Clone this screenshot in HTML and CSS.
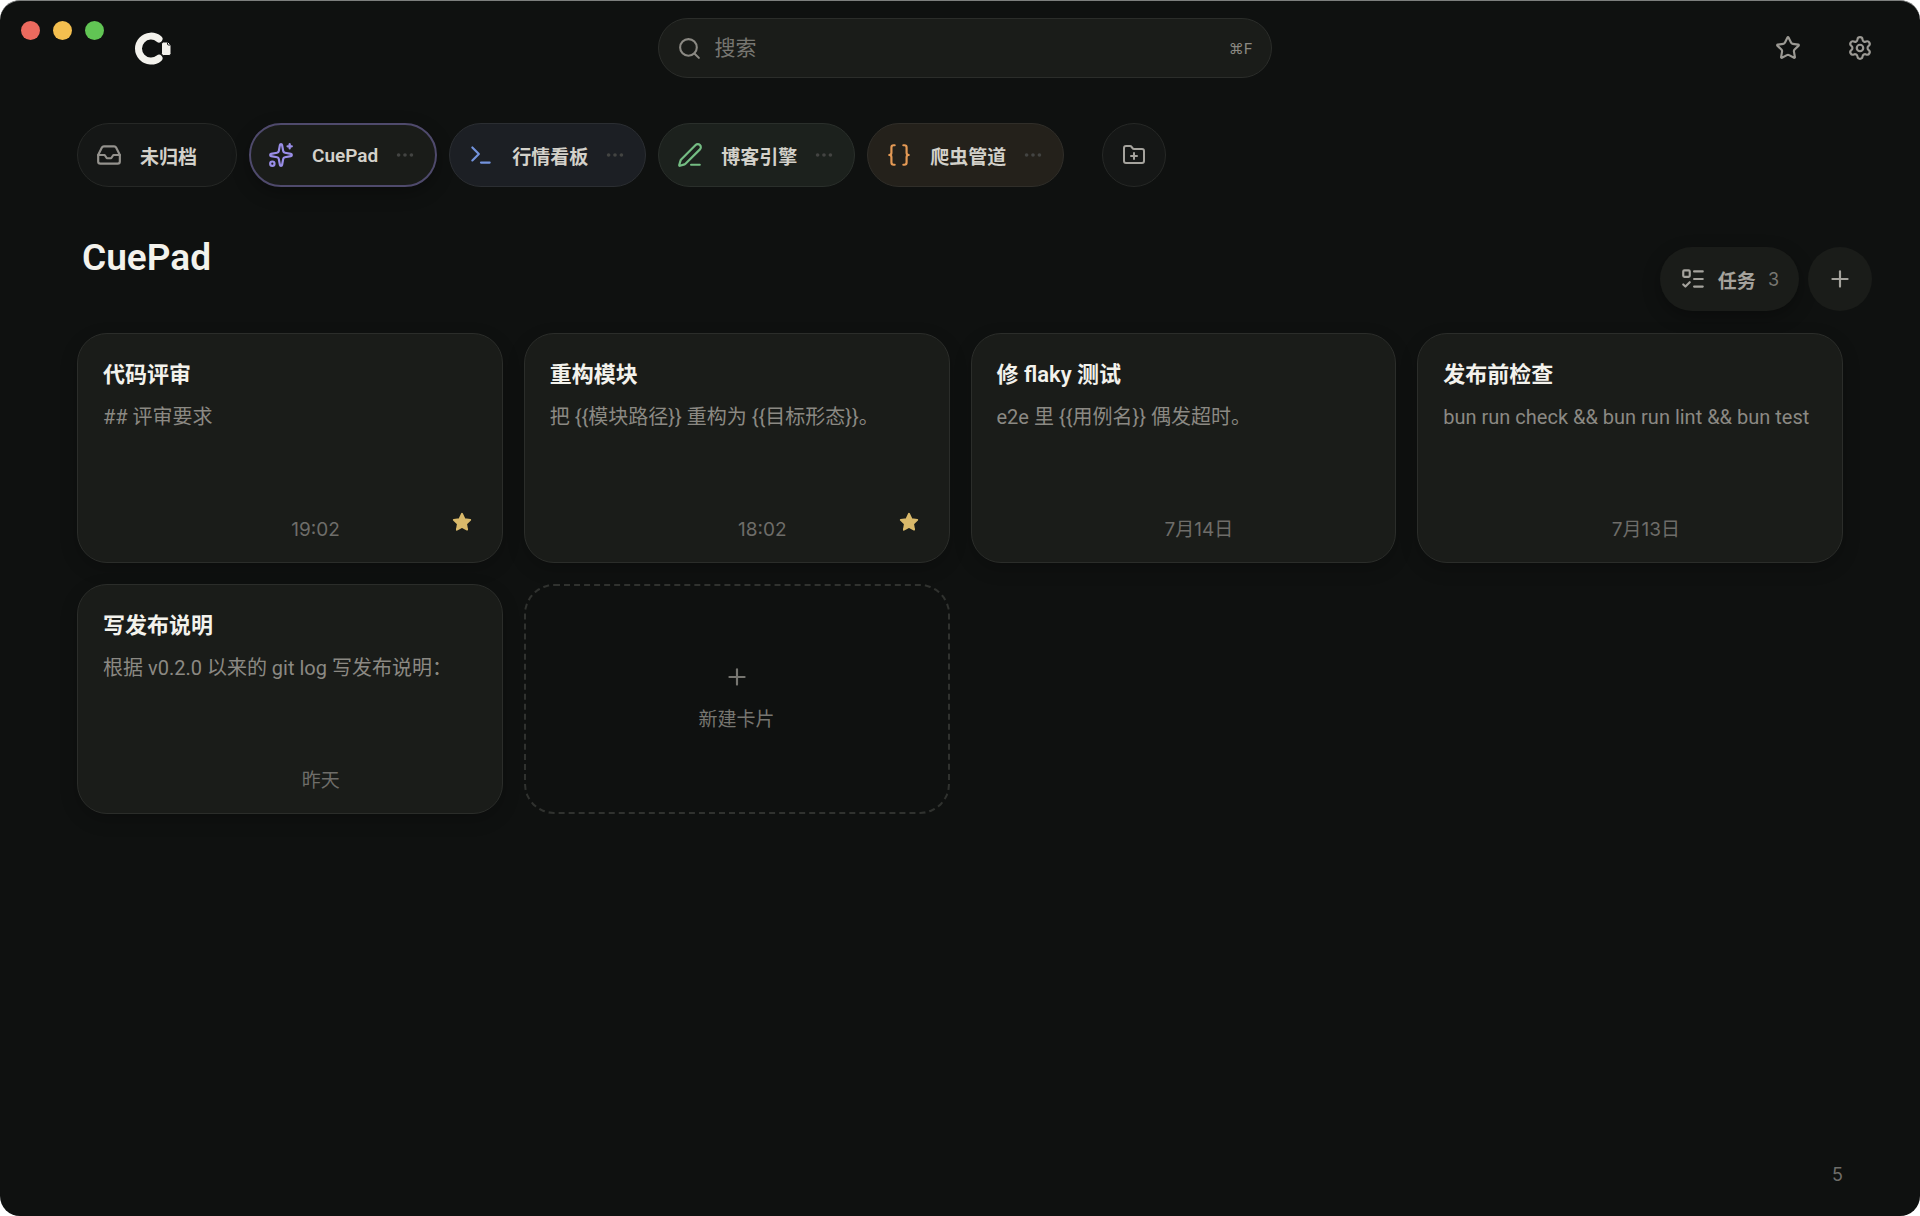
FILE: index.html
```html
<!DOCTYPE html>
<html lang="zh-CN">
<head>
    <meta charset="UTF-8">
    <meta name="viewport" content="width=device-width, initial-scale=1.0">
    <title>CuePad</title>
    <link rel="stylesheet" href="styles.css">
</head>
<body>
    <div class="window">
        <div class="traffic-lights">
            <span class="light red"></span>
            <span class="light yellow"></span>
            <span class="light green"></span>
        </div>

        <header class="topbar">
            <svg class="logo" viewBox="0 0 38 36" aria-hidden="true">
                <path d="M25 9A12.500 12.500 0 1 0 25 28.200" fill="none" stroke="currentColor" stroke-width="7" stroke-linecap="round"/>
                <path d="M29.500 12h4.500l3 3v8.500a2 2 0 0 1-2 2h-5.500a2 2 0 0 1-2-2v-9.500a2 2 0 0 1 2-2z" fill="currentColor" stroke="#0f1110" stroke-width="1"/>
                <path d="M33.500 12.500v1.500q0 1 1 1h2" fill="none" stroke="#0f1110" stroke-width="1"/>
            </svg>

            <label class="search">
                <svg class="icon" viewBox="0 0 24 24"><circle cx="11" cy="11" r="8"/><path d="m21 21-4.300-4.300"/></svg>
                <input type="text" placeholder="搜索" aria-label="搜索">
                <kbd>⌘F</kbd>
            </label>

            <div class="topbar-actions">
                <button class="icon-button" aria-label="收藏">
                    <svg class="icon" viewBox="0 0 24 24"><path d="M11.525 2.295a.53.53 0 0 1 .95 0l2.310 4.679a2.123 2.123 0 0 0 1.595 1.160l5.166.756a.53.53 0 0 1 .294.904l-3.736 3.638a2.123 2.123 0 0 0-.611 1.878l.882 5.140a.53.53 0 0 1-.771.560l-4.618-2.428a2.122 2.122 0 0 0-1.973 0L6.396 21.010a.53.53 0 0 1-.770-.560l.881-5.139a2.122 2.122 0 0 0-.611-1.879L2.160 9.795a.53.53 0 0 1 .294-.906l5.165-.755a2.122 2.122 0 0 0 1.597-1.160z"/></svg>
                </button>
                <button class="icon-button" aria-label="设置">
                    <svg class="icon" viewBox="0 0 24 24"><path d="M9.671 4.136a2.340 2.340 0 0 1 4.659 0 2.340 2.340 0 0 0 3.319 1.915 2.340 2.340 0 0 1 2.330 4.033 2.340 2.340 0 0 0 0 3.831 2.340 2.340 0 0 1-2.330 4.033 2.340 2.340 0 0 0-3.319 1.915 2.340 2.340 0 0 1-4.659 0 2.340 2.340 0 0 0-3.320-1.915 2.340 2.340 0 0 1-2.330-4.033 2.340 2.340 0 0 0 0-3.831A2.340 2.340 0 0 1 6.350 6.051a2.340 2.340 0 0 0 3.319-1.915"/><circle cx="12" cy="12" r="3"/></svg>
                </button>
            </div>
        </header>

        <nav class="projects">
            <button class="chip no-menu">
                <svg class="icon" viewBox="0 0 24 24"><path d="M22 12h-6l-2 3h-4l-2-3H2"/><path d="M5.450 5.110 2 12v6a2 2 0 0 0 2 2h16a2 2 0 0 0 2-2v-6l-3.450-6.890A2 2 0 0 0 16.760 4H7.240a2 2 0 0 0-1.790 1.110z"/></svg>
                <span>未归档</span>
            </button>
            <button class="chip purple active">
                <svg class="icon" viewBox="0 0 24 24"><path d="M11.017 2.814a1 1 0 0 1 1.966 0l1.051 5.558a2 2 0 0 0 1.594 1.594l5.558 1.051a1 1 0 0 1 0 1.966l-5.558 1.051a2 2 0 0 0-1.594 1.594l-1.051 5.558a1 1 0 0 1-1.966 0l-1.051-5.558a2 2 0 0 0-1.594-1.594l-5.558-1.051a1 1 0 0 1 0-1.966l5.558-1.051a2 2 0 0 0 1.594-1.594z"/><path d="M20 2v4"/><path d="M22 4h-4"/><circle cx="4" cy="20" r="2"/></svg>
                <span>CuePad</span>
                <svg class="dots" viewBox="0 0 24 24"><circle cx="5" cy="12" r="2"/><circle cx="12" cy="12" r="2"/><circle cx="19" cy="12" r="2"/></svg>
            </button>
            <button class="chip blue">
                <svg class="icon" viewBox="0 0 24 24"><path d="M12 19h8"/><path d="m4 17 6-6-6-6"/></svg>
                <span>行情看板</span>
                <svg class="dots" viewBox="0 0 24 24"><circle cx="5" cy="12" r="2"/><circle cx="12" cy="12" r="2"/><circle cx="19" cy="12" r="2"/></svg>
            </button>
            <button class="chip green">
                <svg class="icon" viewBox="0 0 24 24"><path d="M13 21h8"/><path d="M21.174 6.812a1 1 0 0 0-3.986-3.987L3.842 16.174a2 2 0 0 0-.5.830l-1.321 4.352a.5.5 0 0 0 .623.622l4.353-1.320a2 2 0 0 0 .830-.497z"/></svg>
                <span>博客引擎</span>
                <svg class="dots" viewBox="0 0 24 24"><circle cx="5" cy="12" r="2"/><circle cx="12" cy="12" r="2"/><circle cx="19" cy="12" r="2"/></svg>
            </button>
            <button class="chip orange">
                <svg class="icon" viewBox="0 0 24 24"><path d="M8 3H7a2 2 0 0 0-2 2v5a2 2 0 0 1-2 2 2 2 0 0 1 2 2v5a2 2 0 0 0 2 2h1"/><path d="M16 21h1a2 2 0 0 0 2-2v-5a2 2 0 0 1 2-2 2 2 0 0 1-2-2V5a2 2 0 0 0-2-2h-1"/></svg>
                <span>爬虫管道</span>
                <svg class="dots" viewBox="0 0 24 24"><circle cx="5" cy="12" r="2"/><circle cx="12" cy="12" r="2"/><circle cx="19" cy="12" r="2"/></svg>
            </button>
            <button class="round-button add-project" aria-label="新建项目">
                <svg class="icon" viewBox="0 0 24 24"><path d="M12 10v6"/><path d="M9 13h6"/><path d="M20 20a2 2 0 0 0 2-2V8a2 2 0 0 0-2-2h-7.900a2 2 0 0 1-1.690-.900L9.600 3.900A2 2 0 0 0 7.930 3H4a2 2 0 0 0-2 2v13a2 2 0 0 0 2 2z"/></svg>
            </button>
        </nav>

        <div class="page-head">
            <h1>CuePad</h1>
            <div class="page-actions">
                <button class="task-button">
                    <svg class="icon" viewBox="0 0 24 24"><path d="M13 5h8"/><path d="M13 12h8"/><path d="M13 19h8"/><path d="m3 17 2 2 4-4"/><rect x="3" y="4" width="6" height="6" rx="1"/></svg>
                    <span>任务</span>
                    <span class="task-count">3</span>
                </button>
                <button class="round-button" aria-label="新建">
                    <svg class="icon" viewBox="0 0 24 24"><path d="M5 12h14"/><path d="M12 5v14"/></svg>
                </button>
            </div>
        </div>

        <main class="cards">
            <article class="card">
                <h2>代码评审</h2>
                <p>## 评审要求</p>
                <footer>
                    <time>19:02</time>
                    <div class="card-actions">
                        <svg class="star" viewBox="0 0 24 24"><path d="m12 3 2.800 5.800 6.200.900-4.500 4.400 1.100 6.300L12 17.400l-5.600 3 1.100-6.300L3 9.700l6.200-.900z"/></svg>
                    </div>
                </footer>
            </article>
            <article class="card">
                <h2>重构模块</h2>
                <p>把 {{模块路径}} 重构为 {{目标形态}}。</p>
                <footer>
                    <time>18:02</time>
                    <div class="card-actions">
                        <svg class="star" viewBox="0 0 24 24"><path d="m12 3 2.800 5.800 6.200.900-4.500 4.400 1.100 6.300L12 17.400l-5.600 3 1.100-6.300L3 9.700l6.200-.900z"/></svg>
                    </div>
                </footer>
            </article>
            <article class="card">
                <h2>修 flaky 测试</h2>
                <p>e2e 里 {{用例名}} 偶发超时。</p>
                <footer>
                    <time>7月14日</time>
                    <div class="card-actions"></div>
                </footer>
            </article>
            <article class="card">
                <h2>发布前检查</h2>
                <p>bun run check &amp;&amp; bun run lint &amp;&amp; bun test</p>
                <footer>
                    <time>7月13日</time>
                    <div class="card-actions"></div>
                </footer>
            </article>
            <article class="card">
                <h2>写发布说明</h2>
                <p>根据 v0.2.0 以来的 git log 写发布说明：</p>
                <footer>
                    <time>昨天</time>
                    <div class="card-actions"></div>
                </footer>
            </article>
            <button class="new-card">
                <svg class="icon" viewBox="0 0 24 24"><path d="M5 12h14"/><path d="M12 5v14"/></svg>
                <span>新建卡片</span>
            </button>
        </main>

        <div class="card-total">5</div>
    </div>
</body>
</html>
```
FILE: styles.css
```css
:root {
    --bg: #0f1110;
    --surface: #1a1c19;
    --border: #2b2d2a;
    --text: #f3f2ec;
    --text-soft: #d3d1ca;
    --text-muted: #8b8983;
    --text-faint: #6e6d69;
    --number-font: Inter, "Noto Sans CJK SC", sans-serif;
}

* {
    box-sizing: border-box;
    margin: 0;
    padding: 0;
}

html {
    background: #fff;
}

body {
    font-family: Roboto, "Noto Sans CJK SC", sans-serif;
    color: var(--text);
}

button,
input,
kbd {
    font: inherit;
    color: inherit;
    background: none;
    border: none;
}

button {
    cursor: pointer;
}

.window {
    position: relative;
    display: flex;
    flex-direction: column;
    min-height: 100vh;
    background: var(--bg);
    border-top: 1px solid #7d7f7e;
    border-radius: 20px;
}

.icon {
    width: 26px;
    height: 26px;
    flex: none;
    fill: none;
    stroke: currentColor;
    stroke-width: 2;
    stroke-linecap: round;
    stroke-linejoin: round;
}

/* window controls sit over the top bar */
.traffic-lights {
    position: absolute;
    top: 20px;
    left: 21px;
    display: flex;
    gap: 13px;
}

.light {
    width: 19px;
    height: 19px;
    border-radius: 50%;
}

.red { background: #ec6a5e; }
.yellow { background: #f4bf4f; }
.green { background: #61c554; }

/* top bar */
.topbar {
    display: grid;
    grid-template-columns: 1fr minmax(200px, 614px) 1fr;
    align-items: center;
    padding: 17px 34px 0 43px;
}

.logo {
    width: 38px;
    height: 36px;
    margin-left: 91px;
    color: var(--text);
}

.search {
    display: flex;
    align-items: center;
    gap: 13px;
    height: 60px;
    padding: 0 18px;
    background: var(--surface);
    border: 1px solid var(--border);
    border-radius: 30px;
    color: var(--text-muted);
}

.search .icon {
    width: 25px;
    height: 25px;
}

.search input {
    flex: 1;
    min-width: 0;
    font-size: 21px;
    outline: none;
}

.search input::placeholder {
    color: #777671;
}

.search kbd {
    font-family: var(--number-font);
    font-size: 15px;
    color: var(--text-muted);
}

.topbar-actions {
    display: flex;
    justify-content: flex-end;
    gap: 20px;
}

.icon-button {
    display: flex;
    align-items: center;
    justify-content: center;
    width: 52px;
    height: 52px;
    color: #9c9a94;
}

/* project chips */
.projects {
    display: flex;
    gap: 12px;
    padding: 45px 77px 0;
}

.chip {
    display: flex;
    align-items: center;
    height: 64px;
    padding: 0 19px 0 18px;
    background: #151716;
    border: 1px solid #262826;
    border-radius: 32px;
    font-size: 19px;
    font-weight: 600;
    color: var(--text-soft);
    white-space: nowrap;
}

.chip .icon {
    margin-right: 18px;
    color: #94928d;
}

.chip.no-menu {
    padding-right: 39px;
}

.dots {
    width: 22px;
    height: 22px;
    margin-left: 16px;
    fill: #434442;
}

.chip.blue { background: #1c1f24; border-color: #2b2e32; }
.chip.green { background: #1c211d; border-color: #2a2f2b; }
.chip.orange { background: #24211b; border-color: #302e29; }

.chip.active {
    background: var(--surface);
    border: 2px solid #4f4a6c;
    padding: 0 19px 0 17px;
    box-shadow: 0 6px 18px rgba(0, 0, 0, 0.3);
}

.chip.purple .icon { color: #9a8ee8; }
.chip.blue .icon { color: #7393dd; }
.chip.green .icon { color: #74bd83; }
.chip.orange .icon { color: #e59a55; }

.round-button {
    display: flex;
    align-items: center;
    justify-content: center;
    width: 64px;
    height: 64px;
    background: var(--surface);
    border-radius: 50%;
    color: #a5a39d;
}

.add-project {
    margin-left: 26px;
    background: #151716;
    border: 1px solid #262826;
}

.add-project .icon {
    width: 24px;
    height: 24px;
}

/* page title and actions */
.page-head {
    display: flex;
    justify-content: space-between;
    padding: 48px 48px 22px 82px;
}

h1 {
    font-size: 37px;
    line-height: 46px;
    font-weight: 600;
}

.page-actions {
    display: flex;
    gap: 9px;
    padding-top: 12px;
}

.task-button {
    display: flex;
    align-items: center;
    height: 64px;
    padding: 0 20px;
    background: var(--surface);
    border-radius: 32px;
    font-size: 19px;
    font-weight: 600;
    color: #a5a39d;
    box-shadow: 0 6px 18px rgba(0, 0, 0, 0.3);
}

.task-button .icon {
    margin-right: 12px;
}

.task-count {
    margin-left: 12px;
    font-family: var(--number-font);
    font-size: 18px;
    font-weight: 400;
    color: #777671;
}

/* cards */
.cards {
    display: grid;
    grid-template-columns: repeat(4, minmax(0, 1fr));
    gap: 21px;
    padding: 0 77px;
}

.card {
    display: flex;
    flex-direction: column;
    min-height: 230px;
    padding: 25px 25px 21px;
    background: var(--surface);
    border: 1px solid var(--border);
    border-radius: 30px;
    box-shadow: 0 6px 18px rgba(0, 0, 0, 0.2);
}

.card h2 {
    font-size: 22px;
    line-height: 32px;
    font-weight: 600;
}

.card p {
    margin-top: 12px;
    font-size: 20px;
    line-height: 28px;
    color: var(--text-muted);
    white-space: nowrap;
    overflow: hidden;
}

.card footer {
    display: flex;
    justify-content: flex-end;
    align-items: flex-end;
    margin-top: auto;
}

.card time {
    font-family: var(--number-font);
    font-size: 19px;
    line-height: 22px;
    color: var(--text-faint);
}

.card-actions {
    display: flex;
    justify-content: flex-end;
    width: 137px;
    height: 30px;
    padding-right: 4px;
}

.star {
    width: 22px;
    height: 22px;
    fill: #d9b96a;
    stroke: #d9b96a;
    stroke-width: 2;
    stroke-linejoin: round;
}

.new-card {
    display: flex;
    flex-direction: column;
    align-items: center;
    justify-content: center;
    gap: 14px;
    min-height: 230px;
    padding-bottom: 3px;
    border: 2px dashed #30322f;
    border-radius: 30px;
    font-size: 19px;
    color: #777671;
}

.card-total {
    margin-top: auto;
    padding: 0 77px 30px;
    font-family: var(--number-font);
    font-size: 18px;
    line-height: 22px;
    text-align: right;
    color: var(--text-faint);
}

@media (max-width: 1200px) {
    .cards {
        grid-template-columns: repeat(2, minmax(0, 1fr));
    }

    .projects {
        flex-wrap: wrap;
    }
}
```
